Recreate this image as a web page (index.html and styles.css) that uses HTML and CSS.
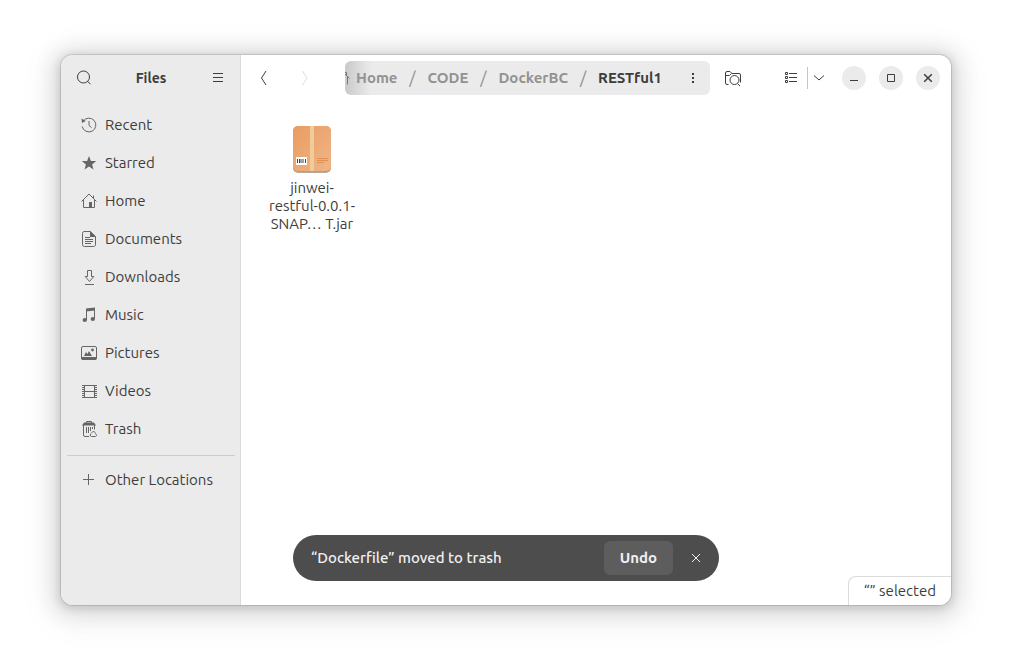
FILE: index.html
```html
<!DOCTYPE html>
<html lang="en">
<head>
<meta charset="utf-8">
<title>Files</title>
<link rel="stylesheet" href="styles.css">
</head>
<body>
<div class="window">
  <aside class="sidebar">
    <header class="sidebar-header">
      <button class="tool" aria-label="Search"><svg width="16" height="16" viewBox="0 0 16 16"><circle cx="7.500" cy="7" r="6"/><path d="M11.500 11.200l3 3"/></svg></button>
      <h1 class="title">Files</h1>
      <button class="tool" aria-label="Main menu"><svg width="16" height="16" viewBox="0 0 16 16"><path d="M3 3.500h10M3 7.500h10M3 11.500h10"/></svg></button>
    </header>
    <nav class="places">
      <a class="place" href="#recent"><svg width="16" height="16" viewBox="0 0 16 16"><path d="M2.200 4.200A6.900 6.900 0 1 1 1.200 9.500M8 4v4.500l2.500 2"/><path class="solid" d="M.5 1.500L4.800 4 1 6z"/></svg>Recent</a>
      <a class="place" href="#starred"><svg width="16" height="16" viewBox="0 0 16 16"><path class="solid" d="M8 1l1.900 4.900 5.300.2-4.100 3.300 1.400 5.100L8 11.600l-4.500 2.900 1.400-5.100L.8 6.100l5.300-.2z"/></svg>Starred</a>
      <a class="place" href="#home"><svg width="16" height="16" viewBox="0 0 16 16"><path d="M.5 8.500L8 1l7.500 7.500M2.500 7v7.500h11V7M12.500 5V2.500"/><path class="solid" d="M8 9h3v6H8z"/></svg>Home</a>
      <a class="place" href="#documents"><svg width="16" height="16" viewBox="0 0 16 16"><path d="M3 .5h6.500l5 5V13a2 2 0 0 1-2 2.500H3.500a2 2 0 0 1-2-2v-11a2 2 0 0 1 1.500-2zM4 6.500h5M4 8.500h8M4 10.500h8M4 12.500h6"/><path class="solid" d="M9 0l6 6H9z"/></svg>Documents</a>
      <a class="place" href="#downloads"><svg width="16" height="16" viewBox="0 0 16 16"><path d="M6.500 1.500h4v6h2.300L8.500 12.500 4.200 7.500h2.300zM4 15.500h9"/></svg>Downloads</a>
      <a class="place" href="#music"><svg width="16" height="16" viewBox="0 0 16 16"><path d="M5.500 13V2.500l8-1V12"/><path class="solid" d="M5 1.500l9-1v3l-9 1z"/><ellipse class="solid" cx="3.800" cy="13" rx="2.200" ry="1.900"/><ellipse class="solid" cx="11.800" cy="12" rx="2.200" ry="1.900"/></svg>Music</a>
      <a class="place" href="#pictures"><svg width="16" height="16" viewBox="0 0 16 16"><rect x=".5" y="1.500" width="15" height="12" rx="1.500"/><path class="solid" d="M0 12h16v1.500L15 15H1l-1-1.500zM3 11l2-4 1.500 2L8 6l3 5z"/><circle class="solid" cx="11.500" cy="5" r="1.400"/></svg>Pictures</a>
      <a class="place" href="#videos"><svg width="16" height="16" viewBox="0 0 16 16"><path d="M3.500 2v12M13.500 2v12M3 2.500h11M3 8.500h11M3 14.500h11"/><path class="film" d="M2 2v13M15 2v13"/></svg>Videos</a>
      <a class="place" href="#trash"><svg width="16" height="16" viewBox="0 0 16 16"><path d="M5.500 2V.5h5V2M2.500 4v10q0 1.500 1.500 1.500h4M13.500 4v4.500M5.500 6v6M7.500 6v6M9.500 6v4M11.500 6v2"/><path class="solid" d="M3 1.500h10l2 3H1z"/><path d="M10.500 12l2-2 2 2M10 12.500l-1 2 1.500 1h4l1.200-1-1.200-2"/></svg>Trash</a>
      <hr class="divider">
      <a class="place" href="#other"><svg width="16" height="16" viewBox="0 0 16 16"><path d="M7.500 2v11M2 7.500h11"/></svg>Other Locations</a>
    </nav>
  </aside>
  <main class="content">
    <header class="toolbar">
      <div class="history">
        <button class="tool" aria-label="Back"><svg width="16" height="16" viewBox="0 0 16 16"><path d="M10 1L5.500 8l4.500 7"/></svg></button>
        <button class="tool" aria-label="Forward" disabled><svg width="16" height="16" viewBox="0 0 16 16"><path d="M5.500 1L10 8l-4.500 7"/></svg></button>
      </div>
      <nav class="pathbar" aria-label="Path">
        <svg class="path-home" width="5" height="16" viewBox="11 0 5 16"><path d="M11 4l4.500 4.500M13.500 7v7.500M12.500 5V2.500H11"/></svg>
        <a class="crumb" href="#home">Home</a><span class="slash">/</span>
        <a class="crumb" href="#code">CODE</a><span class="slash">/</span>
        <a class="crumb" href="#dockerbc">DockerBC</a><span class="slash">/</span>
        <a class="crumb current" href="#restful1">RESTful1</a>
        <button class="tool more" aria-label="Folder menu"><svg width="16" height="16" viewBox="0 0 16 16"><path class="solid" d="M7 3h2v2H7zM7 7h2v2H7zM7 11h2v2H7z"/></svg></button>
      </nav>
      <button class="tool" aria-label="Search this folder"><svg width="18" height="16" viewBox="0 0 18 16"><path d="M4.500 14.500H3a1.500 1.500 0 0 1-1.500-1.500V3q0-1.500 1.500-1.500h3l2 2h7q1.500 0 1.500 1.500v7.500M1.500 5.500h4l2-2"/><circle cx="10.500" cy="10" r="4.500"/><path d="M13.500 13.500l2.500 2.500"/></svg></button>
      <div class="view">
        <button class="tool list" aria-label="List view"><svg width="16" height="16" viewBox="0 0 16 16"><path d="M2.500 2.500h2v2h-2zM2.500 6.500h2v2h-2zM2.500 10.500h2v2h-2zM6 3.500h8M6 7.500h8M6 11.500h8"/></svg></button>
        <button class="tool arrow" aria-label="View options"><svg width="16" height="16" viewBox="0 0 16 16"><path d="M3 5.500l5 4.500 5-4.500"/></svg></button>
      </div>
      <div class="controls">
        <button class="control" aria-label="Minimize"><svg width="16" height="16" viewBox="0 0 16 16"><path d="M4 10.500h8"/></svg></button>
        <button class="control" aria-label="Maximize"><svg width="16" height="16" viewBox="0 0 16 16"><path d="M4.500 4.500h7v7h-7z"/></svg></button>
        <button class="control" aria-label="Close"><svg class="close" width="16" height="16" viewBox="0 0 16 16"><path d="M4.200 4.200l7.600 7.600M11.800 4.200l-7.600 7.600"/></svg></button>
      </div>
    </header>
    <section class="files">
      <figure class="file">
        <svg class="file-icon" width="42" height="50" viewBox="0 0 42 50">
          <defs><linearGradient id="box" x1="0" y1="0" x2="1" y2="1"><stop offset="0" stop-color="#e99c62"/><stop offset="1" stop-color="#f0b588"/></linearGradient></defs>
          <rect x="2" y="3" width="38" height="46" rx="5" fill="#b8aaa0"/>
          <rect x="2" y="2" width="38" height="46" rx="5" fill="#d9935f"/>
          <rect x="2" y="2" width="38" height="45" rx="5" fill="url(#box)"/>
          <path fill="#f0cd98" d="M19 2h4v45h-4z"/>
          <path fill="#fff" d="M5 33h11v8H5z"/>
          <path fill="#444" d="M6 35h1v4H6zM8 35h1v4H8zM9.500 35h1v4h-1zM11.500 35h1v4h-1zM14 35h1v4h-1z"/>
          <path fill="#e08f55" d="M26 34h11v1H26zM26 36h11v1H26zM26 38h7v1h-7z"/>
        </svg>
        <figcaption class="file-name">jinwei-<br>restful-0.0.1-<br>SNAP… T.jar</figcaption>
      </figure>
    </section>
    <div class="status">“” selected</div>
  </main>
  <div class="toast" role="status">
    <span class="toast-text">“Dockerfile” moved to trash</span>
    <button class="undo">Undo</button>
    <button class="tool dismiss" aria-label="Dismiss"><svg width="16" height="16" viewBox="0 0 16 16"><path d="M4 4l8 8M12 4l-8 8"/></svg></button>
  </div>
</div>
</body>
</html>
```
FILE: styles.css
```css
* { box-sizing: border-box; }
body {
  margin: 0;
  min-height: 100vh;
  display: flex;
  padding: 55px 61px 67px;
  background: #fff;
  color: #3d3d3d;
  font: 15px/18px Ubuntu, "Noto Sans", sans-serif;
}
button { border: 0; padding: 0; background: none; color: inherit; font: inherit; }
a { color: inherit; text-decoration: none; }
svg { display: block; flex: none; fill: none; stroke: currentColor; }
.solid { fill: currentColor; stroke: none; }
.film { stroke-width: 2; stroke-dasharray: 1 1; }
.close { stroke-width: 1.5; }
.window {
  position: relative;
  flex: 1;
  display: flex;
  border-radius: 12px;
  background: #fff;
  box-shadow: 0 0 0 1px #0000001c, 0 2px 8px 2px #00000021, 0 3px 20px 10px #00000017, 0 6px 32px 16px #0000000a;
}
.sidebar {
  width: 180px;
  background: #ebebeb;
  border-right: 1px solid #dadada;
  border-radius: 12px 0 0 12px;
}
.sidebar-header { display: flex; align-items: center; height: 46px; padding: 0 5px 0 6px; }
.title { flex: 1; margin: 0; text-align: center; font-size: 14px; font-weight: 700; line-height: 18px; }
.tool { display: flex; align-items: center; justify-content: center; flex: none; width: 34px; height: 34px; }
.tool:disabled { color: #ddd; }
.places { padding: 5px 5px 0 6px; }
.place { display: flex; align-items: center; gap: 8px; height: 38px; padding: 0 14px; white-space: nowrap; }
.place svg { color: #666; }
.divider { height: 1px; margin: 7px 0 5px; border: 0; background: #cdcdcd; }
.content { position: relative; flex: 1; min-width: 0; display: flex; flex-direction: column; }
.toolbar { display: flex; align-items: center; height: 46px; padding: 0 11px 0 6px; }
.history { display: flex; gap: 7px; margin-right: 23px; }
.pathbar {
  flex: 1;
  display: flex;
  align-items: center;
  height: 34px;
  margin-right: 6px;
  border-radius: 6px;
  background: linear-gradient(90deg, #c9c9c9, #ebebeb 26px);
  overflow: hidden;
  font-weight: 700;
}
.path-home { margin-right: 6px; color: #777; }
.crumb { color: #929292; }
.crumb.current { color: #3d3d3d; }
.slash { width: 30px; text-align: center; font-size: 17px; font-weight: 400; color: #929292; }
.more { margin-left: auto; }
.view { display: flex; align-items: center; margin: 0 12px 0 25px; }
.list { width: 32px; }
.arrow { width: 23px; height: 22px; border-left: 1px solid #c4c4c4; }
.controls { display: flex; gap: 13px; }
.control { display: flex; align-items: center; justify-content: center; width: 24px; height: 24px; border-radius: 50%; background: #ebebeb; }
.files { flex: 1; padding: 23px; }
.file { display: flex; flex-direction: column; align-items: center; width: 96px; margin: 0; }
.file-icon { stroke: none; }
.file-name { margin-top: 5px; text-align: center; white-space: nowrap; }
.status {
  position: absolute;
  right: 0;
  bottom: 0;
  padding: 5px 15px;
  border: solid #dcdcdc;
  border-width: 1px 0 0 1px;
  border-radius: 8px 0 12px;
  background: #fff;
}
.toast {
  position: absolute;
  left: 50%;
  bottom: 24px;
  transform: translateX(-50%);
  display: flex;
  align-items: center;
  width: 426px;
  height: 46px;
  padding: 0 6px 0 18px;
  border-radius: 23px;
  background: #4d4d4d;
  color: #f0f0f0;
  font-weight: 500;
}
.toast-text { flex: 1; }
.undo { height: 34px; margin-right: 6px; padding: 0 16px; border-radius: 6px; background: #5d5d5d; font-weight: 600; }
```
